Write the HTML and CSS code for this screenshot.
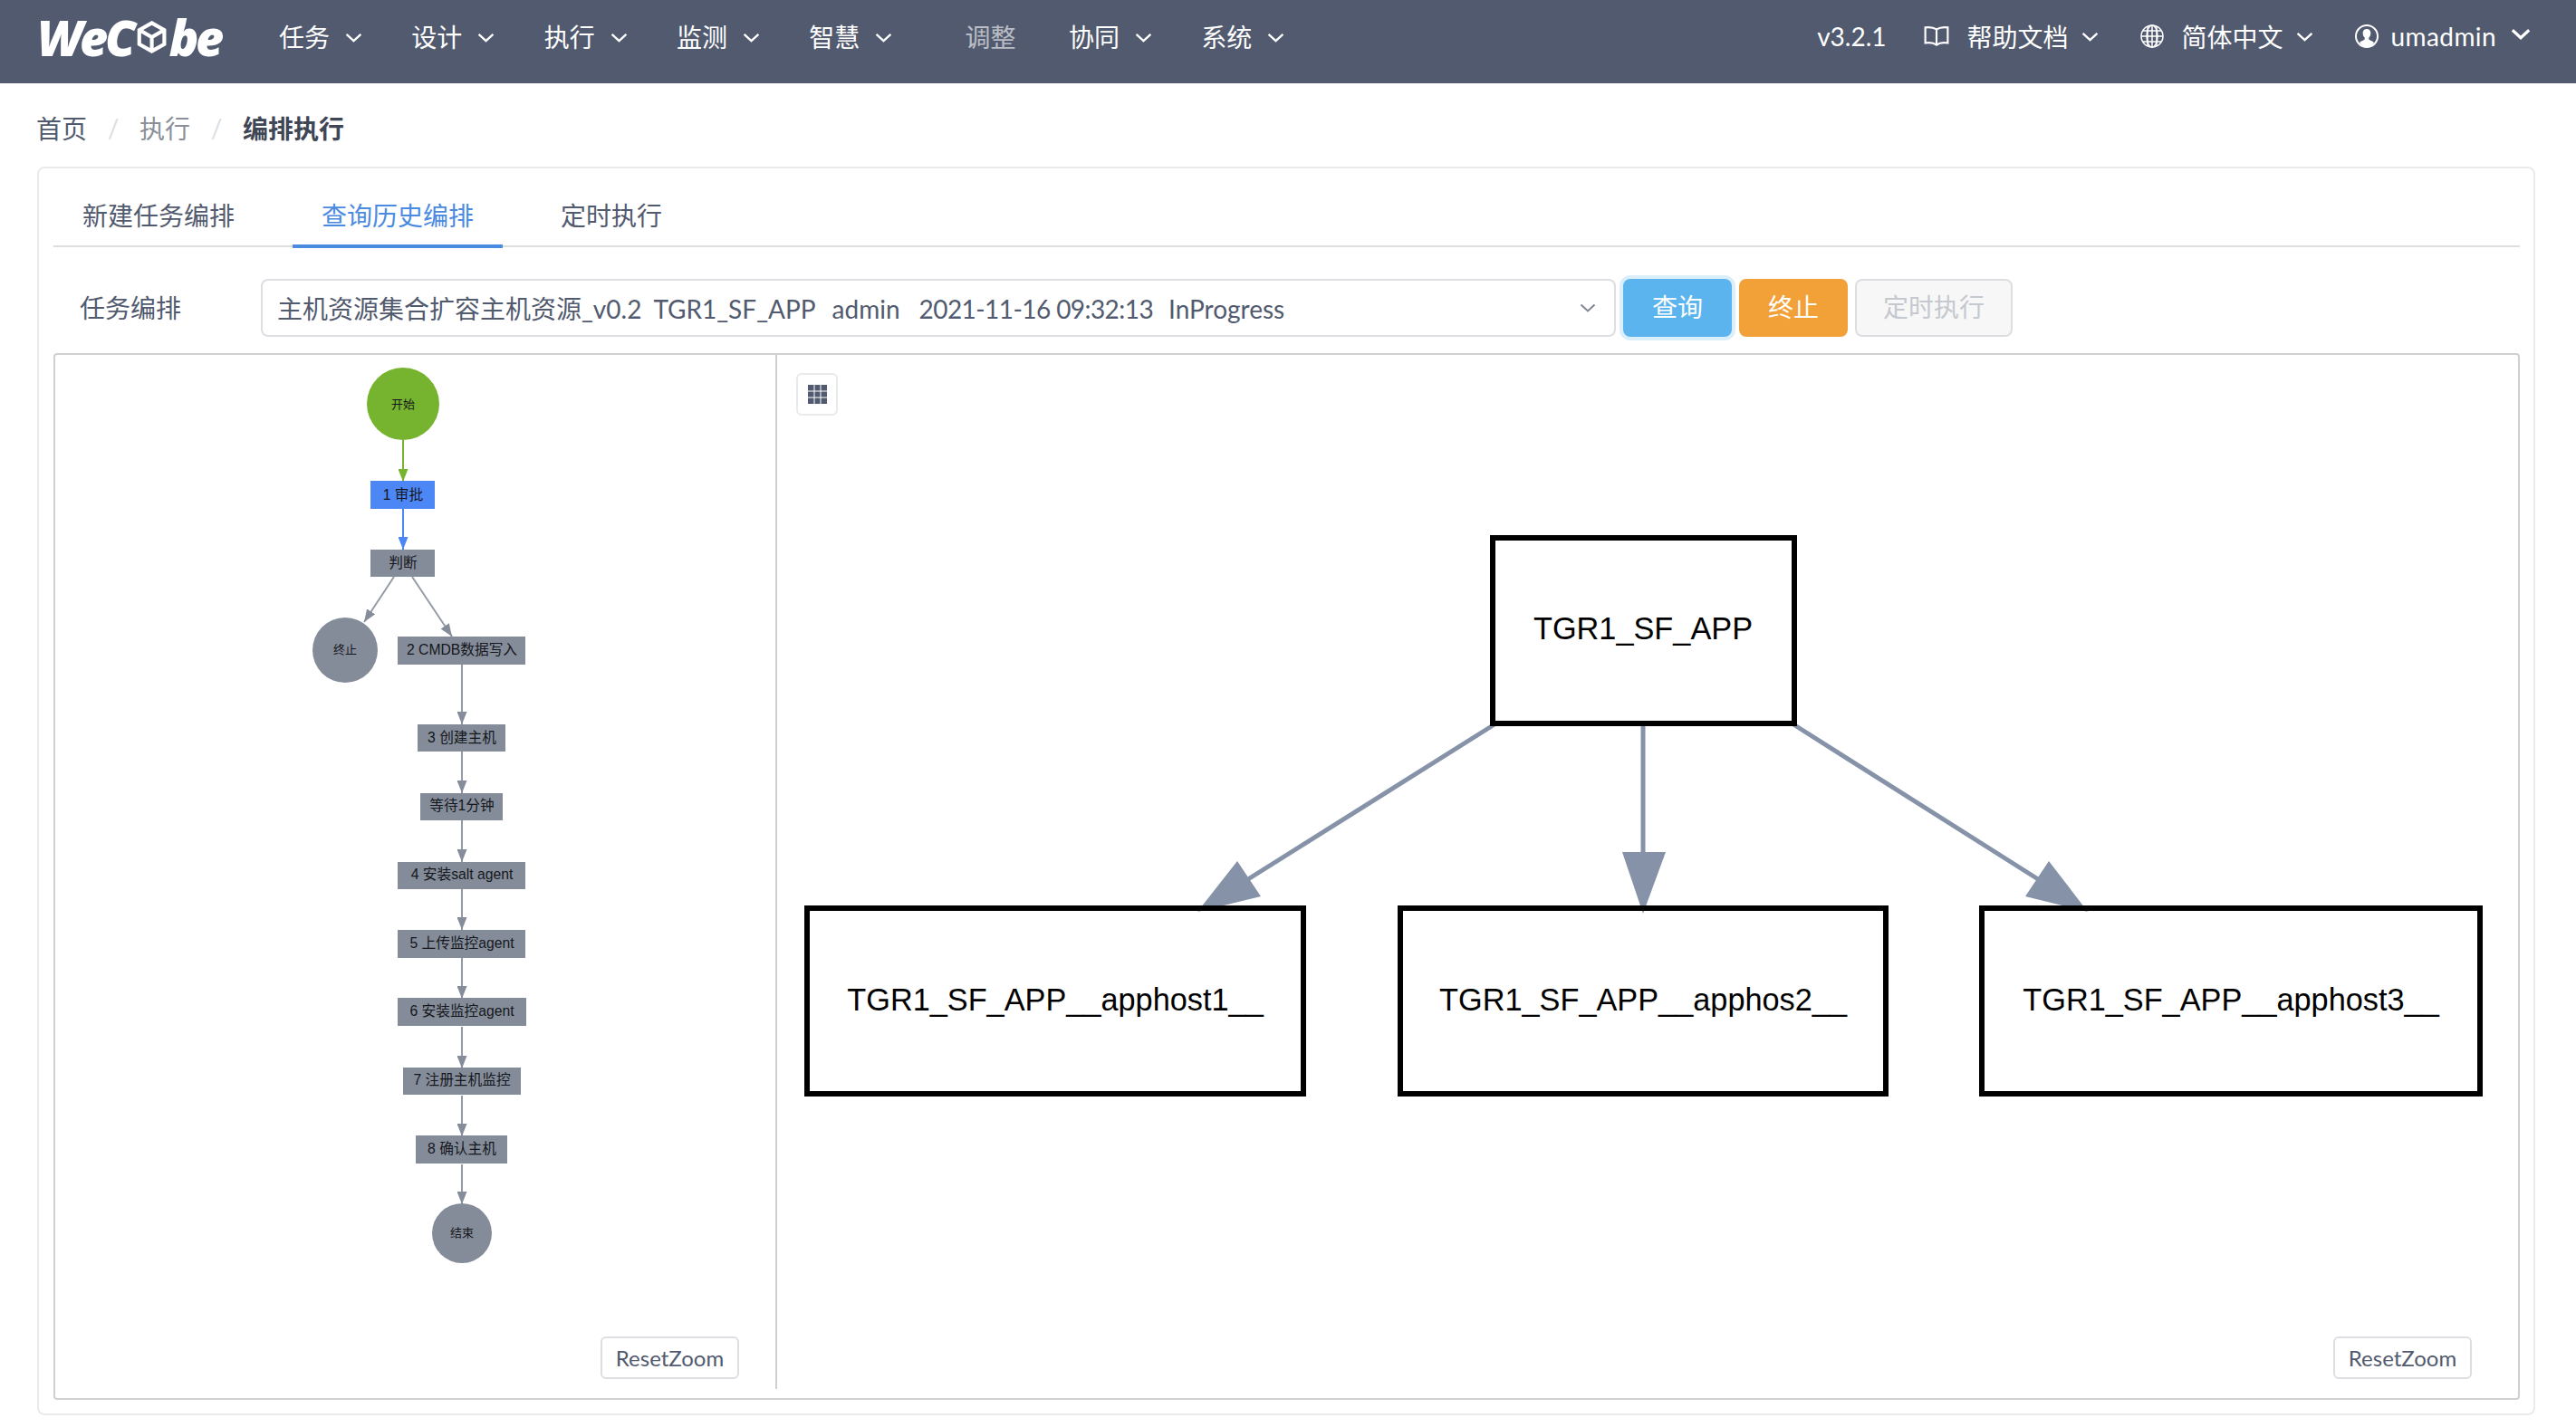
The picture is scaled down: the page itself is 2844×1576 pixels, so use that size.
FILE: index.html
```html
<!DOCTYPE html>
<html lang="zh-CN">
<head>
<meta charset="utf-8"/>
<title>WeCube</title>
<link rel="stylesheet" href="styles.css">
</head>
<body>
<svg class="icon-defs">
  <defs>
    <symbol id="chev" viewBox="0 0 18 10"><path d="M1.5 1.5 9 8.500l7.500-7"/></symbol>
    <marker id="head-green" markerUnits="userSpaceOnUse" markerWidth="14" markerHeight="11" refX="14" refY="5.5" orient="auto"><path d="M0 0 14 5.5 0 11z" fill="#76b32f"/></marker>
    <marker id="head-blue" markerUnits="userSpaceOnUse" markerWidth="14" markerHeight="11" refX="14" refY="5.5" orient="auto"><path d="M0 0 14 5.5 0 11z" fill="#4d86f5"/></marker>
    <marker id="head-gray" markerUnits="userSpaceOnUse" markerWidth="14" markerHeight="11" refX="14" refY="5.5" orient="auto"><path d="M0 0 14 5.5 0 11z" fill="#868d9a"/></marker>
  </defs>
</svg>

<header class="topbar">
  <div class="logo">
    <span>WeC</span>
    <svg class="logo-cube" viewBox="0 0 36 40"><path d="M18 3 33 11.500v17L18 37 3 28.500v-17zM3.500 11.500 18 20l14.500-8.500M18 20v17"/></svg>
    <span>be</span>
  </div>
  <nav class="menu">
    <div class="menu-item">任务<svg class="chev"><use href="#chev"/></svg></div>
    <div class="menu-item">设计<svg class="chev"><use href="#chev"/></svg></div>
    <div class="menu-item">执行<svg class="chev"><use href="#chev"/></svg></div>
    <div class="menu-item">监测<svg class="chev"><use href="#chev"/></svg></div>
    <div class="menu-item">智慧<svg class="chev"><use href="#chev"/></svg></div>
    <div class="menu-item plain">调整</div>
    <div class="menu-item">协同<svg class="chev"><use href="#chev"/></svg></div>
    <div class="menu-item">系统<svg class="chev"><use href="#chev"/></svg></div>
  </nav>
  <div class="top-right">
    <span class="version">v3.2.1</span>
    <div class="top-item help">
      <svg class="top-icon book" viewBox="0 0 26 21"><path d="M13 3.500C10 1.500 6 1 1.500 1.500v16c4.500-.8 8.500-.3 11.500 2 3-2.300 7-2.800 11.500-2v-16C20 1 16 1.500 13 3.500zM13 3.500v16"/></svg>
      <span>帮助文档</span>
      <svg class="chev"><use href="#chev"/></svg>
    </div>
    <div class="top-item lang">
      <svg class="top-icon globe" viewBox="0 0 26 26"><circle cx="13" cy="13" r="12"/><ellipse cx="13" cy="13" rx="6" ry="12"/><path d="M13 1v24M3 7h20M1 13h24M3 19h20M8 2v22M18 2v22"/></svg>
      <span>简体中文</span>
      <svg class="chev"><use href="#chev"/></svg>
    </div>
    <div class="top-item user">
      <svg class="top-icon avatar" viewBox="0 0 26 26"><circle cx="13" cy="13" r="12"/><path class="avatar-fill" d="M13 5c-3 0-4.500 2.200-4.300 5 .1 2 .9 3.500 2 4.500v2c-1 1-4 1.500-5.700 3.500C7 23.500 10 25 13 25s6-1.500 8-5c-1.700-2-4.700-2.500-5.700-3.500v-2c1.100-1 1.900-2.500 2-4.500.2-2.800-1.300-5-4.300-5z"/></svg>
      <span class="user-name">umadmin</span>
      <svg class="chev big"><use href="#chev"/></svg>
    </div>
  </div>
</header>

<div class="breadcrumb">
  <span>首页</span><i>/</i><span class="muted">执行</span><i>/</i><b>编排执行</b>
</div>

<main class="page">
  <section class="card">
    <div class="tabs">
      <div class="tab">新建任务编排</div>
      <div class="tab active">查询历史编排</div>
      <div class="tab">定时执行</div>
    </div>

    <div class="query-row">
      <label class="query-label">任务编排</label>
      <div class="select">
        <div class="select-text">
          <span>主机资源集合扩容主机资源_v0.2</span>
          <span>TGR1_SF_APP</span>
          <span class="f-user">admin</span>
          <span class="f-date">2021-11-16 09:32:13</span>
          <span class="f-status">InProgress</span>
        </div>
        <svg class="chev gray"><use href="#chev"/></svg>
      </div>
      <button class="btn btn-info">查询</button>
      <button class="btn btn-warn">终止</button>
      <button class="btn btn-off">定时执行</button>
    </div>

    <div class="graph-panel">
      <div class="flow-pane">
        <svg class="flow-graph" viewBox="61 392 795 1142">
          <g class="edges">
            <line class="e-green" x1="445" y1="486" x2="445" y2="532" marker-end="url(#head-green)"/>
            <line class="e-blue" x1="445" y1="562" x2="445" y2="607" marker-end="url(#head-blue)"/>
            <line class="e-gray" x1="435" y1="637" x2="402" y2="687" marker-end="url(#head-gray)"/>
            <line class="e-gray" x1="455" y1="637" x2="499" y2="703" marker-end="url(#head-gray)"/>
            <line class="e-gray" x1="510" y1="734" x2="510" y2="800" marker-end="url(#head-gray)"/>
            <line class="e-gray" x1="510" y1="830" x2="510" y2="876" marker-end="url(#head-gray)"/>
            <line class="e-gray" x1="510" y1="906" x2="510" y2="952" marker-end="url(#head-gray)"/>
            <line class="e-gray" x1="510" y1="982" x2="510" y2="1027" marker-end="url(#head-gray)"/>
            <line class="e-gray" x1="510" y1="1058" x2="510" y2="1103" marker-end="url(#head-gray)"/>
            <line class="e-gray" x1="510" y1="1134" x2="510" y2="1180" marker-end="url(#head-gray)"/>
            <line class="e-gray" x1="510" y1="1210" x2="510" y2="1255" marker-end="url(#head-gray)"/>
            <line class="e-gray" x1="510" y1="1286" x2="510" y2="1330" marker-end="url(#head-gray)"/>
          </g>

          <circle class="n-green" cx="445" cy="446" r="40"/>
          <text class="n-small" x="445" y="446">开始</text>

          <rect class="n-blue" x="409" y="531" width="71" height="31"/>
          <text class="n-text" x="445" y="546">1 审批</text>

          <rect class="n-gray" x="409" y="607" width="71" height="30"/>
          <text class="n-text" x="445" y="621">判断</text>

          <circle class="n-gray" cx="381" cy="718" r="36"/>
          <text class="n-small" x="381" y="717">终止</text>

          <rect class="n-gray" x="439" y="703" width="141" height="31"/>
          <text class="n-text" x="510" y="717">2 CMDB数据写入</text>

          <rect class="n-gray" x="461" y="800" width="97" height="30"/>
          <text class="n-text" x="510" y="814">3 创建主机</text>

          <rect class="n-gray" x="464" y="876" width="91" height="30"/>
          <text class="n-text" x="510" y="889">等待1分钟</text>

          <rect class="n-gray" x="439" y="952" width="141" height="30"/>
          <text class="n-text" x="510" y="965">4 安装salt agent</text>

          <rect class="n-gray" x="439" y="1027" width="141" height="31"/>
          <text class="n-text" x="510" y="1041">5 上传监控agent</text>

          <rect class="n-gray" x="439" y="1102" width="142" height="31"/>
          <text class="n-text" x="510" y="1116">6 安装监控agent</text>

          <rect class="n-gray" x="445" y="1179" width="130" height="30"/>
          <text class="n-text" x="510" y="1192">7 注册主机监控</text>

          <rect class="n-gray" x="459" y="1254" width="101" height="31"/>
          <text class="n-text" x="510" y="1268">8 确认主机</text>

          <circle class="n-gray" cx="510" cy="1362" r="33"/>
          <text class="n-small" x="510" y="1361">结束</text>
        </svg>
        <button class="reset-zoom">ResetZoom</button>
      </div>

      <div class="host-pane">
        <button class="grid-btn">
          <svg viewBox="0 0 21 21"><path class="grid-fill" d="M0 0h21v21H0z"/><path class="grid-line" d="M7 0v21M14 0v21M0 7h21M0 14h21"/></svg>
        </button>
        <svg class="host-graph" viewBox="858 392 1922 1142">
          <g class="host-edges">
            <line x1="1650" y1="800" x2="1370" y2="976"/>
            <line x1="1814" y1="801" x2="1814" y2="945"/>
            <line x1="1980" y1="800" x2="2258" y2="976"/>
            <polygon points="1322,1007 1366,951 1392,990"/>
            <polygon points="1814,1009 1791,941 1839,941"/>
            <polygon points="2305,1007 2262,951 2236,990"/>
          </g>
          <rect class="host-box" x="1648" y="594" width="333" height="205"/>
          <text class="host-text" x="1814" y="694">TGR1_SF_APP</text>
          <rect class="host-box" x="891" y="1003" width="548" height="205"/>
          <text class="host-text" x="1165" y="1104">TGR1_SF_APP__apphost1__</text>
          <rect class="host-box" x="1546" y="1003" width="536" height="205"/>
          <text class="host-text" x="1814" y="1104">TGR1_SF_APP__apphos2__</text>
          <rect class="host-box" x="2188" y="1003" width="550" height="205"/>
          <text class="host-text" x="2463" y="1104">TGR1_SF_APP__apphost3__</text>
        </svg>
        <button class="reset-zoom">ResetZoom</button>
      </div>
    </div>
  </section>
</main>
</body>
</html>
```
FILE: styles.css
```css
:root {
  --bar: #515a6e;
  --text: #515a6e;
  --line: #dcdee2;
  --line-soft: #e8eaec;
  --blue: #4a8ae0;
}
html, body {
  margin: 0;
  background: #fff;
  color: var(--text);
  font-family: Lato, "Noto Sans CJK SC", sans-serif;
  font-size: 28px;
}
.icon-defs {
  position: absolute;
  width: 0;
  height: 0;
}
.chev {
  width: 19px;
  height: 11px;
  fill: none;
  stroke: #fff;
  stroke-width: 2.2;
}
.chev.gray {
  width: 18px;
  height: 10px;
  stroke: #808695;
  stroke-width: 2;
}
.chev.big {
  width: 22px;
  height: 13px;
  stroke-width: 2.6;
  margin-top: -6px;
}

/* top bar */
.topbar {
  display: flex;
  align-items: center;
  height: 80px;
  padding: 0 50px 12px 41px;
  background: var(--bar);
  color: #fff;
}
.logo {
  display: flex;
  align-items: center;
  width: 203px;
  font-family: "Open Sans", sans-serif;
  font-size: 54px;
  font-weight: 800;
  font-style: italic;
  letter-spacing: -3.4px;
  line-height: 40px;
  margin-top: 2px;
}
.logo-cube {
  width: 36px;
  height: 40px;
  margin: 0 3px 0 4px;
  fill: none;
  stroke: #fff;
  stroke-width: 4.500;
}
.menu {
  display: flex;
  margin-left: 64px;
  gap: 54.3px;
}
.menu-item {
  display: flex;
  align-items: center;
  gap: 17px;
}
.menu-item .chev {
  margin-top: 3px;
}
.menu-item.plain {
  margin-left: 26px;
  margin-right: 4px;
  opacity: 0.6;
}
.top-right {
  display: flex;
  align-items: center;
  margin-left: auto;
  gap: 48px;
}
.version {
  margin-right: -5px;
}
.top-item {
  display: flex;
  align-items: center;
  gap: 20px;
}
.top-item .chev {
  margin-left: -6px;
}
.top-icon {
  width: 26px;
  height: 26px;
  fill: none;
  stroke: #fff;
  stroke-width: 2;
}
.top-icon.book {
  width: 28px;
  margin-left: -2px;
}
.top-icon.globe {
  stroke-width: 1.5;
}
.avatar-fill {
  fill: #fff;
  stroke: none;
}
.lang {
  margin-left: -2px;
}
.user {
  gap: 14px;
  margin-left: -2px;
}
.user-name {
  letter-spacing: 0.4px;
}
.user .chev {
  margin-left: 2px;
}

/* breadcrumb */
.breadcrumb {
  display: flex;
  align-items: center;
  height: 92px;
  padding: 5px 0 0 40px;
  box-sizing: border-box;
  color: var(--text);
}
.breadcrumb i {
  width: 58px;
  text-align: center;
  font-style: normal;
  color: #dcdee2;
}
.breadcrumb .muted {
  color: #8a8f99;
}
.breadcrumb b {
  font-weight: 700;
  color: #3f4656;
}

/* main card */
.page {
  padding: 0 45px 13px 41px;
}
.card {
  box-sizing: border-box;
  height: 1379px;
  padding: 16px 15px 15px 16px;
  border: 2px solid var(--line-soft);
  border-radius: 8px;
}
.tabs {
  display: flex;
  gap: 32px;
  box-sizing: border-box;
  height: 71px;
  border-bottom: 2px solid var(--line);
}
.tab {
  box-sizing: border-box;
  height: 72px;
  padding: 0 32px;
  line-height: 72px;
  color: var(--text);
}
.tab.active {
  color: var(--blue);
  border-bottom: 4px solid var(--blue);
}

.query-row {
  display: flex;
  align-items: center;
  margin-top: 35px;
  gap: 8px;
}
.query-label {
  box-sizing: border-box;
  width: 229px;
  padding-left: 29px;
  margin-right: -8px;
  margin-top: -2px;
}
.select {
  display: flex;
  align-items: center;
  justify-content: space-between;
  box-sizing: border-box;
  width: 1496px;
  height: 64px;
  padding: 0 20px 0 16px;
  border: 2px solid var(--line);
  border-radius: 8px;
}
.select-text {
  display: flex;
  align-items: baseline;
  gap: 13px;
  white-space: nowrap;
}
.f-user {
  margin-left: 5px;
}
.f-date {
  margin-left: 8px;
  letter-spacing: -0.57px;
}
.f-status {
  margin-left: 4px;
}
.btn {
  height: 64px;
  padding: 0 0 4px;
  border: 2px solid transparent;
  border-radius: 8px;
  font: inherit;
  color: #fff;
}
.btn-info {
  width: 120px;
  background: #5cb4ef;
  box-shadow: 0 0 0 4px rgba(92, 180, 239, 0.22);
}
.btn-warn {
  width: 120px;
  background: #f2a139;
}
.btn-off {
  width: 174px;
  background: #f7f7f7;
  border-color: var(--line);
  color: #c5c8ce;
}

/* graph area */
.graph-panel {
  display: flex;
  align-items: flex-start;
  box-sizing: border-box;
  height: 1156px;
  margin-top: 18px;
  border: 2px solid #d0d0d0;
  border-radius: 4px;
}
.flow-pane {
  position: relative;
  width: 795px;
  height: 1142px;
  border-right: 2px solid #d0d0d0;
}
.host-pane {
  position: relative;
  flex: 1;
  height: 1142px;
}
.flow-graph, .host-graph {
  display: block;
  width: 100%;
  height: 100%;
}
.reset-zoom {
  position: absolute;
  bottom: 11px;
  right: 40px;
  box-sizing: border-box;
  width: 153px;
  height: 47px;
  padding: 0;
  background: #fff;
  border: 2px solid var(--line);
  border-radius: 6px;
  font-family: Lato, sans-serif;
  font-size: 24px;
  color: var(--text);
}
.host-pane .reset-zoom {
  right: 51px;
}
.grid-btn {
  position: absolute;
  top: 20px;
  left: 21px;
  display: flex;
  align-items: center;
  justify-content: center;
  box-sizing: border-box;
  width: 46px;
  height: 47px;
  padding: 0;
  background: #fff;
  border: 2px solid var(--line-soft);
  border-radius: 6px;
}
.grid-btn svg {
  width: 21px;
  height: 21px;
}
.grid-fill {
  fill: var(--bar);
}
.grid-line {
  stroke: #fff;
  stroke-width: 1;
}

/* flow nodes */
.flow-graph text {
  font-family: "Liberation Sans", "Noto Sans CJK SC", sans-serif;
  text-anchor: middle;
  dominant-baseline: central;
  fill: #14171c;
}
.n-text {
  font-size: 15.7px;
}
.n-small {
  font-size: 13px;
}
.n-green {
  fill: #76b32f;
}
.n-blue {
  fill: #4d86f5;
}
.n-gray {
  fill: #858c99;
}
.edges line {
  stroke-width: 2;
}
.e-green {
  stroke: #76b32f;
}
.e-blue {
  stroke: #4d86f5;
}
.e-gray {
  stroke: #959ba6;
}

/* host diagram */
.host-box {
  fill: none;
  stroke: #000;
  stroke-width: 6;
}
.host-edges line {
  stroke: #8592a8;
  stroke-width: 5;
}
.host-edges polygon {
  fill: #8592a8;
}
.host-text {
  font-family: "Liberation Sans", sans-serif;
  font-size: 34.3px;
  text-anchor: middle;
  dominant-baseline: central;
  fill: #000;
}
```
